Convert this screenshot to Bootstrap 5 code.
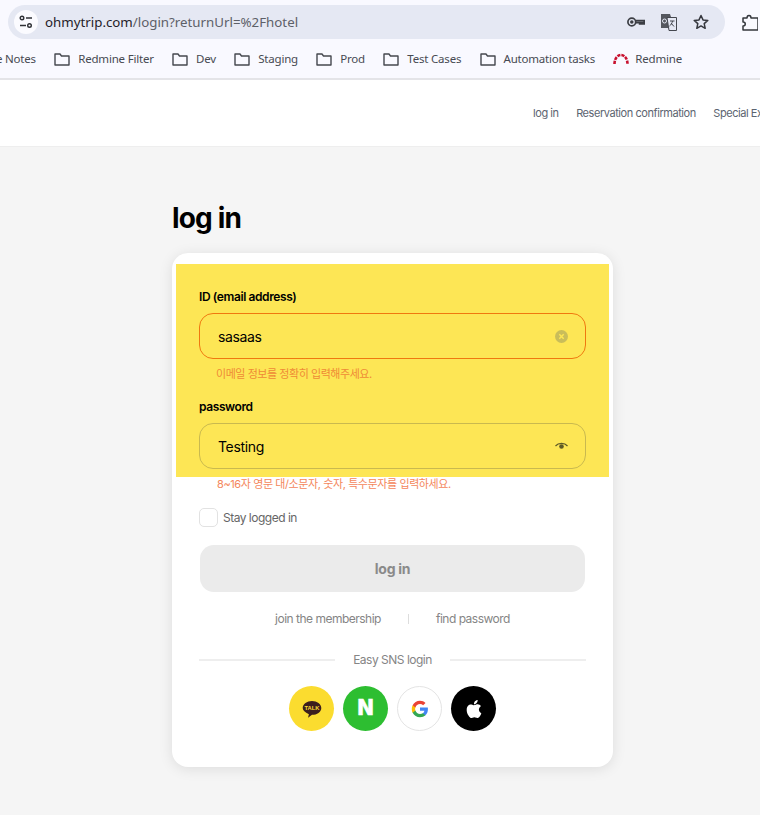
<!doctype html>
<html lang="ko">
<head>
<meta charset="utf-8">
<title>log in</title>
<link href="https://cdn.jsdelivr.net/npm/bootstrap@5.3.0/dist/css/bootstrap.min.css" rel="stylesheet">
<style>
html,body{height:815px;overflow:hidden}
body{background:#f5f5f5;font-family:Inter,"Noto Sans CJK KR",sans-serif;color:#111}
.chrome-top{height:80px;background:#f9f9ff;border-bottom:2px solid #e4e4e8;font-family:"Noto Sans",sans-serif;overflow:hidden}
.url-row{height:45px;padding:5px 0 0 8px}
.omnibox{width:717px;height:34px;border-radius:17px;background:#e5e8f3;padding:0 16px 0 6px;flex:none}
.tune-disc{width:24px;height:24px;border-radius:50%;background:#fbfbff}
.url-text{font-size:13.3px;margin-left:7px;color:#5d6068;line-height:34px}
.url-text b{font-weight:400;color:#1f2128}
.ext-slot{margin-left:17px}
.bm-row{height:28px;font-size:11.5px;letter-spacing:-.2px;color:#474a52;white-space:nowrap;margin-left:-4px;gap:18.3px}
.bm-item{gap:8px}
.top-nav{height:67px;background:#fff;border-bottom:1px solid #eee;padding:0 0 0 533px;gap:17.5px;font-size:11px;letter-spacing:-.44px;color:#5c6470;white-space:nowrap;overflow:hidden}
.page-wrap{width:441px;margin-left:172px}
.page-title{font-size:28px;font-weight:700;color:#000;margin:0;line-height:34px;padding-top:54px;letter-spacing:-.85px}
.login-panel{margin-top:18px;height:514px;background:#fff;border:0;border-radius:16px;box-shadow:0 2px 14px rgba(0,0,0,.1);padding-top:11px}
.auto-band{margin:0 4px;height:213px;background:#fde655;padding:24px 23px 0}
.field-cap{font-size:12px;font-weight:600;line-height:17px;margin:0 0 8px;color:#000;letter-spacing:-.4px}
.field-box{height:46px;border:1px solid #c9b94f;border-radius:14px;padding:0 17px 0 18px;font-size:14px;letter-spacing:-.35px;color:#000}
.field-box.bad{border-color:#f0780f}
.hint-line{font-size:11px;line-height:14px;padding-left:17px;letter-spacing:-.45px}
.hint-a{color:#ef8a35;margin:8px 0 17px}
.hint-b{color:#f4875c;margin:0 0 0 28px;padding-left:17px;letter-spacing:-.4px}
.keep-row{margin:17px 0 0 27px;gap:5px;font-size:12px;color:#666;letter-spacing:-.5px}
.keep-box{width:19px;height:19px;border:1px solid #e2e2e2;border-radius:5px;background:#fff}
.login-btn{display:block;width:385px;height:47px;margin:18px 0 0 28px;border:0;border-radius:14px;background:#ebebeb;color:#8a8a8a;font-size:14px;font-weight:700;letter-spacing:-.3px}
.help-row{margin-top:19px;height:16px;font-size:12px;color:#858585;letter-spacing:-.5px}
.help-sep{width:1px;height:10px;background:#ddd;margin:0 27px}
.sns-cap{margin:24px 27px 0;gap:18px;font-size:12px;color:#858585;letter-spacing:-.5px}
.sns-cap i{display:block;flex:1;height:2px;background:#eee}
.sns-row{gap:9px;margin-top:17px}
.sns-dot{width:45px;height:45px;border-radius:50%}
.sns-kakao{background:#fbdc2f}.sns-naver{background:#2dbe31;color:#fff;font:700 21px/1 "DejaVu Sans",sans-serif;-webkit-text-stroke:.6px #fff}
.sns-google{background:#fff;border:1px solid #e4e4e4}.sns-apple{background:#000}
</style>
</head>
<body>
<div class="chrome-top">
  <div class="url-row d-flex align-items-start">
    <div class="omnibox d-flex align-items-center">
      <span class="tune-disc d-flex align-items-center justify-content-center">
        <svg width="14" height="14" viewBox="0 0 14 14" fill="none" stroke="#2f3136" stroke-width="1.4"><circle cx="3" cy="3" r="1.8"/><path d="M7 3h6M1 10.5h6"/><circle cx="10.5" cy="10.5" r="1.8"/></svg>
      </span>
      <span class="url-text"><b>ohmytrip.com</b>/login?returnUrl=%2Fhotel</span>
      <span class="ms-auto d-flex align-items-center" style="gap:15px">
        <svg width="18" height="18" viewBox="0 0 18 18" fill="none" stroke="#3c3e44" stroke-width="1.7"><circle cx="4.800" cy="9" r="3.900"/><circle cx="4.800" cy="9" r=".9" fill="#3c3e44"/><path d="M8.700 7.600h8.500v3.200h-1.500v-1.200h-1.600v1.200h-1.500v-1.200H8.700"/></svg>
        <svg width="18" height="18" viewBox="0 0 18 18"><path d="M1 1h9l1 3H7l2 12-1-1H1z" fill="#55585f"/><path d="M7 4.5h9.500v13H9z" fill="#e5e8f3" stroke="#44474e"/><path d="M10 8h4.500M12.500 8c-.3 2-1.500 4-3 5M11 10l3 3.500" stroke="#44474e" fill="none"/><circle cx="4.500" cy="8" r="2" fill="none" stroke="#e5e8f3"/></svg>
        <svg width="16" height="16" viewBox="0 0 16 16" fill="none" stroke="#35373d" stroke-width="1.5" stroke-linejoin="round"><path d="M8 1.500l2 4.400 4.800.5-3.600 3.200 1 4.700L8 11.900l-4.200 2.400 1-4.700L1.200 6.400 6 5.900z"/></svg>
      </span>
    </div>
    <span class="ext-slot">
      <svg width="16" height="18" viewBox="0 0 16 18" fill="none" stroke="#34373d" stroke-width="1.5" stroke-linejoin="round" class="mt-2"><path d="M1 4h4c0-3.500 4-3.500 4 0h7v12H1v-4c3 0 3-4 0-4z"/></svg>
    </span>
  </div>
  <div class="bm-row d-flex align-items-center">
    <span>e Notes</span>
    <span class="bm-item d-flex align-items-center"><svg width="16" height="14" viewBox="0 0 16 14" fill="none" stroke="#45484f" stroke-width="1.400"><path d="M1 2h5l1.500 2H15v9H1z" stroke-linejoin="round"/></svg>Redmine Filter</span>
    <span class="bm-item d-flex align-items-center"><svg width="16" height="14" viewBox="0 0 16 14" fill="none" stroke="#45484f" stroke-width="1.400"><path d="M1 2h5l1.500 2H15v9H1z" stroke-linejoin="round"/></svg>Dev</span>
    <span class="bm-item d-flex align-items-center"><svg width="16" height="14" viewBox="0 0 16 14" fill="none" stroke="#45484f" stroke-width="1.400"><path d="M1 2h5l1.500 2H15v9H1z" stroke-linejoin="round"/></svg>Staging</span>
    <span class="bm-item d-flex align-items-center"><svg width="16" height="14" viewBox="0 0 16 14" fill="none" stroke="#45484f" stroke-width="1.400"><path d="M1 2h5l1.500 2H15v9H1z" stroke-linejoin="round"/></svg>Prod</span>
    <span class="bm-item d-flex align-items-center"><svg width="16" height="14" viewBox="0 0 16 14" fill="none" stroke="#45484f" stroke-width="1.400"><path d="M1 2h5l1.500 2H15v9H1z" stroke-linejoin="round"/></svg>Test Cases</span>
    <span class="bm-item d-flex align-items-center"><svg width="16" height="14" viewBox="0 0 16 14" fill="none" stroke="#45484f" stroke-width="1.400"><path d="M1 2h5l1.500 2H15v9H1z" stroke-linejoin="round"/></svg>Automation tasks</span>
    <span class="d-flex align-items-center" style="gap:6px"><svg width="16" height="12" viewBox="0 0 16 12" fill="none" stroke="#c8102e" stroke-width="2.600" stroke-dasharray="3.200 1"><path d="M1.500 11C1.500 5 5 2 8 2s6.500 3 6.500 9"/></svg>Redmine</span>
  </div>
</div>

<nav class="top-nav d-flex align-items-center">
  <span>log in</span><span>Reservation confirmation</span><span>Special Exhibitions</span>
</nav>

<main class="page-wrap">
  <h1 class="page-title">log in</h1>
  <section class="card login-panel">
    <div class="auto-band">
      <p class="field-cap">ID (email address)</p>
      <div class="field-box bad d-flex align-items-center justify-content-between">
        <span>sasaas</span>
        <svg width="13" height="13" viewBox="0 0 13 13"><circle cx="6.500" cy="6.500" r="6.500" fill="#c9bd5a"/><path d="M4.300 4.300l4.400 4.400M8.700 4.300l-4.400 4.400" stroke="#fde655" stroke-width="1.500"/></svg>
      </div>
      <p class="hint-line hint-a">이메일 정보를 정확히 입력해주세요.</p>
      <p class="field-cap">password</p>
      <div class="field-box d-flex align-items-center justify-content-between">
        <span>Testing</span>
        <svg width="13" height="10" viewBox="0 0 13 10"><path d="M.5 5C3.500 1.500 9.500 1.500 12.500 5" fill="none" stroke="#5e5a26" stroke-width="1.200"/><circle cx="6.500" cy="5.500" r="2.300" fill="#5e5a26"/></svg>
      </div>
    </div>
    <p class="hint-line hint-b">8~16자 영문 대/소문자, 숫자, 특수문자를 입력하세요.</p>
    <div class="keep-row d-flex align-items-center"><span class="keep-box"></span><span>Stay logged in</span></div>
    <button type="button" class="btn login-btn">log in</button>
    <div class="help-row d-flex align-items-center justify-content-center"><span>join the membership</span><span class="help-sep"></span><span>find password</span></div>
    <div class="sns-cap d-flex align-items-center"><i></i><span>Easy SNS login</span><i></i></div>
    <div class="sns-row d-flex justify-content-center">
      <span class="sns-dot sns-kakao d-flex align-items-center justify-content-center">
        <svg width="20" height="20" viewBox="0 0 20 20"><path d="M10 2c5 0 9.300 2.900 9.300 6.900s-4.300 6.900-9.300 6.900l-4 2.900 .9-3.500C3 13.300 .7 11.300 .7 8.900.7 4.900 5 2 10 2z" fill="#3c1e1e"/><text x="10" y="11" text-anchor="middle" font-family="Liberation Sans" font-weight="700" font-size="5.800" fill="#fbdc2f">TALK</text></svg>
      </span>
      <span class="sns-dot sns-naver d-flex align-items-center justify-content-center">N</span>
      <span class="sns-dot sns-google d-flex align-items-center justify-content-center">
        <svg width="18" height="18" viewBox="0 0 24 24"><path fill="#4285F4" d="M22.560 12.250c0-.78-.07-1.530-.2-2.250H12v4.260h5.920c-.26 1.370-1.040 2.530-2.210 3.310v2.770h3.570c2.080-1.920 3.280-4.740 3.280-8.090z"/><path fill="#34A853" d="M12 23c2.970 0 5.460-.98 7.280-2.660l-3.570-2.770c-.98.66-2.230 1.060-3.710 1.060-2.860 0-5.290-1.930-6.160-4.530H2.180v2.840C3.990 20.530 7.700 23 12 23z"/><path fill="#FBBC05" d="M5.840 14.090c-.22-.66-.35-1.360-.35-2.090s.13-1.430.35-2.090V7.070H2.180C1.430 8.550 1 10.220 1 12s.43 3.450 1.180 4.930l2.850-2.220.81-.62z"/><path fill="#EA4335" d="M12 5.380c1.620 0 3.060.56 4.210 1.640l3.150-3.150C17.450 2.090 14.970 1 12 1 7.700 1 3.990 3.470 2.180 7.070l3.660 2.840c.87-2.600 3.300-4.530 6.160-4.530z"/></svg>
      </span>
      <span class="sns-dot sns-apple d-flex align-items-center justify-content-center">
        <svg width="18" height="18" viewBox="0 0 16 16" fill="#fff"><path d="M11.182.008C11.148-.03 9.923.023 8.857 1.180c-1.066 1.156-.902 2.482-.878 2.516s1.520.087 2.475-1.258.762-2.391.728-2.430m3.314 11.733c-.048-.096-2.325-1.234-2.113-3.422s1.675-2.789 1.698-2.854-.597-.79-1.254-1.157a3.700 3.700 0 0 0-1.563-.434c-.108-.003-.483-.095-1.254.116-.508.139-1.653.589-1.968.607-.316.018-1.256-.522-2.267-.665-.647-.1-1.333.105-1.824.303-.49.197-1.422.759-2.074 2.242-.652 1.483-.311 3.832-.067 4.562s.625 1.925 1.273 2.799c.576.986 1.340 1.670 1.659 1.902s1.219.386 1.843.067c.502-.308 1.408-.485 1.766-.472.357.013 1.061.154 1.782.539.571.197 1.111.115 1.652-.105.541-.221 1.324-1.059 2.238-2.758q.52-1.185.473-1.282"/></svg>
      </span>
    </div>
  </section>
</main>
<script src="https://cdn.jsdelivr.net/npm/bootstrap@5.3.0/dist/js/bootstrap.bundle.min.js"></script>
</body>
</html>
